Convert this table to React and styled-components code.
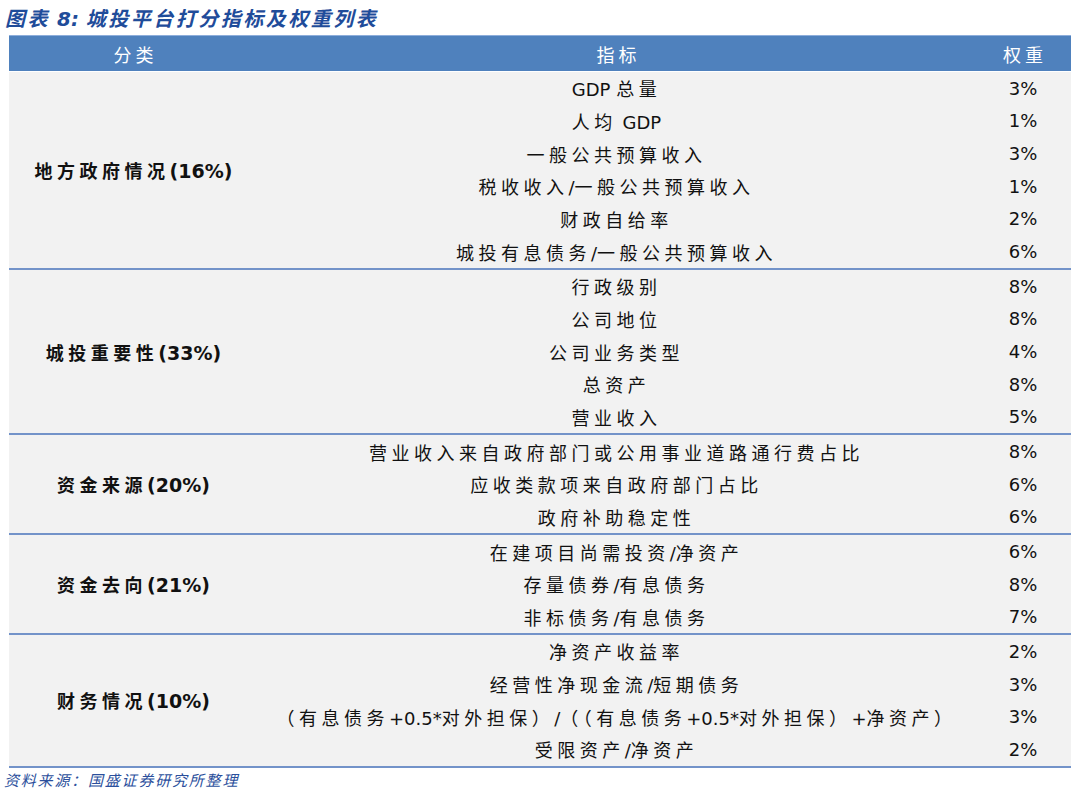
import React from "react";
import styled, { createGlobalStyle } from "styled-components";

const GlobalStyle = createGlobalStyle`
  html, body {
    margin: 0;
    padding: 0;
    background: #ffffff;
  }
  body {
    font-family: "DejaVu Sans", "Noto Sans CJK SC", sans-serif;
  }
`;

const Page = styled.div`
  width: 1080px;
  height: 793px;
  display: flex;
  flex-direction: column;
  padding: 0 9px 0 9px;
  box-sizing: border-box;
  overflow: hidden;
`;

const Title = styled.div`
  height: 35px;
  display: flex;
  align-items: center;
  margin-left: -4px;
  font-family: "DejaVu Sans", "Noto Sans CJK SC", sans-serif;
  font-size: 20px;
  font-weight: 700;
  font-style: italic;
  color: #1f4c9a;
  white-space: pre;
`;

const Table = styled.div`
  display: flex;
  flex-direction: column;
  width: 1062px;
`;

const Grid = styled.div`
  display: grid;
  grid-template-columns: 249px 717px 96px;
`;

const Header = styled(Grid)`
  height: 36px;
  background: #4f81bd;
  border-top: 1px solid #8eaedb;
  box-sizing: border-box;
  color: #ffffff;
  font-size: 18px;
  margin-bottom: 1px;
`;

const HeadCell = styled.div`
  display: flex;
  align-items: center;
  justify-content: center;
  padding-left: 4px;
`;

const Group = styled(Grid)`
  background: #f2f2f2;
  border-bottom: 2px solid #7393c9;
`;

const Category = styled.div`
  display: flex;
  align-items: center;
  justify-content: center;
  font-weight: 700;
  font-size: 19px;
  color: #111;
`;

const Rows = styled.div`
  display: flex;
  flex-direction: column;
`;

const Cell = styled.div`
  height: 32.67px;
  display: flex;
  align-items: center;
  justify-content: center;
  font-size: 18px;
  color: #111;
  white-space: pre;
`;

const Cjk = styled.span`
  font-family: "Noto Sans CJK SC", sans-serif;
  font-size: ${(p) => (p.$size ? `${p.$size}px` : "inherit")};
  font-weight: ${(p) => (p.$bold ? 700 : 400)};
  letter-spacing: ${(p) => p.$gap}px;
`;

const Footer = styled.div`
  margin-top: 1px;
  margin-left: -5px;
  font-size: 15px;
  font-style: italic;
  color: #2b4f9c;
  white-space: pre;
`;

// split text into CJK and latin runs so only CJK is spaced out
const Mixed = ({ text, bold, gap = 4.5, size }) => {
  const parts = text.match(/[\u3000-\u9fff\uff00-\uffef]+|[^\u3000-\u9fff\uff00-\uffef]+/g) || [];
  return (
    <span>
      {parts.map((p, i) =>
        /[\u3000-\u9fff\uff00-\uffef]/.test(p) ? (
          <Cjk key={i} $bold={bold} $gap={gap} $size={size}>{p}</Cjk>
        ) : (
          <span key={i}>{p}</span>
        )
      )}
    </span>
  );
};

const groups = [
  {
    name: "地方政府情况(16%)",
    rows: [
      ["GDP 总量", "3%"],
      ["人均 GDP", "1%"],
      ["一般公共预算收入", "3%"],
      ["税收收入/一般公共预算收入", "1%"],
      ["财政自给率", "2%"],
      ["城投有息债务/一般公共预算收入", "6%"],
    ],
  },
  {
    name: "城投重要性(33%)",
    rows: [
      ["行政级别", "8%"],
      ["公司地位", "8%"],
      ["公司业务类型", "4%"],
      ["总资产", "8%"],
      ["营业收入", "5%"],
    ],
  },
  {
    name: "资金来源(20%)",
    rows: [
      ["营业收入来自政府部门或公用事业道路通行费占比", "8%"],
      ["应收类款项来自政府部门占比", "6%"],
      ["政府补助稳定性", "6%"],
    ],
  },
  {
    name: "资金去向(21%)",
    rows: [
      ["在建项目尚需投资/净资产", "6%"],
      ["存量债券/有息债务", "8%"],
      ["非标债务/有息债务", "7%"],
    ],
  },
  {
    name: "财务情况(10%)",
    rows: [
      ["净资产收益率", "2%"],
      ["经营性净现金流/短期债务", "3%"],
      ["（有息债务+0.5*对外担保）/（（有息债务+0.5*对外担保）+净资产）", "3%"],
      ["受限资产/净资产", "2%"],
    ],
  },
];

const App = () => {
  return (
    <Page>
      <GlobalStyle />
      <Title>
        <Mixed text="图表 8: 城投平台打分指标及权重列表" gap={2.5} bold />
      </Title>
      <Table>
        <Header>
          <HeadCell>
            <Mixed text="分类" gap={4} />
          </HeadCell>
          <HeadCell>
            <Mixed text="指标" gap={4} />
          </HeadCell>
          <HeadCell>
            <Mixed text="权重" gap={4} />
          </HeadCell>
        </Header>
        {groups.map((g) => (
          <Group key={g.name}>
            <Category>
              <Mixed text={g.name} bold gap={4.5} size={18} />
            </Category>
            <Rows>
              {g.rows.map((r) => (
                <Cell key={r[0]}>
                  <Mixed text={r[0]} />
                </Cell>
              ))}
            </Rows>
            <Rows>
              {g.rows.map((r) => (
                <Cell key={r[0]}>{r[1]}</Cell>
              ))}
            </Rows>
          </Group>
        ))}
      </Table>
      <Footer>
        <Mixed text="资料来源：国盛证券研究所整理" gap={1.8} />
      </Footer>
    </Page>
  );
};

export default App;
